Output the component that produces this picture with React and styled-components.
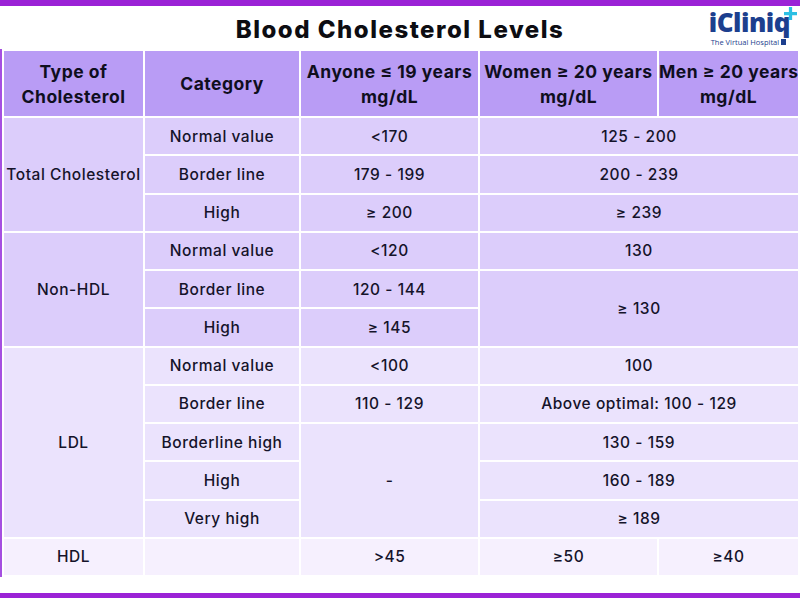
import styled, { createGlobalStyle } from 'styled-components';

const GlobalStyle = createGlobalStyle`
    html, body {
        margin: 0;
        padding: 0;
        background: #fff;
    }
    body {
        font-family: Inter, "Liberation Sans", sans-serif;
        color: #15132a;
    }
`;

const colors = {
    bar: '#9b22d6',
    edge: '#a54fe0',
    head: '#b99cf5',
    mid: '#dccdfb',
    light: '#ebe3fd',
    pale: '#f6f0fe',
};

const Page = styled.div`
    width: 800px;
    height: 600px;
    display: flex;
    flex-direction: column;
    background: #fff;
    overflow: hidden;
`;

const TopBar = styled.div`
    height: 6px;
    background: ${colors.bar};
`;

const TitleRow = styled.div`
    height: 43px;
    display: grid;
    grid-template-columns: 1fr auto 1fr;
    align-items: center;
`;

const Title = styled.h1`
    grid-column: 2;
    margin: 4px 0 0;
    font-size: 24px;
    font-weight: 800;
    letter-spacing: 1.5px;
    color: #0d0d12;
`;

const Logo = styled.div`
    grid-column: 3;
    justify-self: end;
    margin-right: 10px;
    display: flex;
    flex-direction: column;
    align-items: flex-start;
    line-height: 1;
`;

const LogoMark = styled.div`
    position: relative;
    height: 27px;
    font-family: "Open Sans", sans-serif;
    font-size: 26px;
    line-height: 27px;
    font-weight: 800;
    letter-spacing: -0.5px;
    color: #1c3f8e;
`;

const Plus = styled.svg`
    position: absolute;
    top: -2px;
    right: -7px;
`;

const Tagline = styled.div`
    display: flex;
    align-items: center;
    gap: 2px;
    margin-top: 2px;
    margin-left: 2px;
    font-family: "Open Sans", sans-serif;
    font-size: 7.5px;
    line-height: 8px;
    color: #1c3f8e;
`;

const Square = styled.span`
    width: 5px;
    height: 6px;
    background: #1c3f8e;
`;

const Table = styled.table`
    width: 800px;
    border-collapse: separate;
    border-spacing: 2px;
    border-left: 2px solid ${colors.edge};
    border-right: 2px solid ${colors.edge};
    border-top: 0;
    border-bottom: 0;
    margin: 0;
    table-layout: fixed;
`;

const Th = styled.th`
    background: ${colors.head};
    height: 65px;
    padding: 0;
    font-size: 17.5px;
    font-weight: 700;
    letter-spacing: 0.5px;
    line-height: 25px;
    text-align: center;
    white-space: nowrap;
    color: #0f0e1e;
`;

const Td = styled.td`
    background: ${p => colors[p.$tone]};
    height: 36.25px;
    padding: 0;
    font-size: 15.5px;
    font-weight: 500;
    letter-spacing: 0.55px;
    text-align: center;
    white-space: nowrap;
    vertical-align: middle;
`;

const Spacer = styled.div`
    flex: 1;
`;

const BottomBar = styled.div`
    height: 5px;
    margin-bottom: 2px;
    background: ${colors.bar};
`;

const groups = [
    {
        name: 'Total Cholesterol',
        tone: 'mid',
        rows: [
            ['Normal value', '<170', '125 - 200'],
            ['Border line', '179 - 199', '200 - 239'],
            ['High', '≥ 200', '≥ 239'],
        ],
    },
];

export default function App() {
    return (
        <Page>
            <GlobalStyle />
            <TopBar />
            <TitleRow>
                <Title>Blood Cholesterol Levels</Title>
                <Logo>
                    <LogoMark>
                        iCliniq
                        <Plus width="13" height="13" viewBox="0 0 12 12">
                            <path d="M4.5 0h3v4.5H12v3H7.5V12h-3V7.5H0v-3h4.5z" fill="#2bbfe3" />
                        </Plus>
                    </LogoMark>
                    <Tagline>
                        The Virtual Hospital <Square />
                    </Tagline>
                </Logo>
            </TitleRow>
            <Table>
                <colgroup>
                    <col style={{ width: 139 }} />
                    <col style={{ width: 154 }} />
                    <col style={{ width: 177 }} />
                    <col style={{ width: 177 }} />
                    <col style={{ width: 139 }} />
                </colgroup>
                <thead>
                    <tr>
                        <Th>Type of<br />Cholesterol</Th>
                        <Th>Category</Th>
                        <Th>Anyone ≤ 19 years<br />mg/dL</Th>
                        <Th>Women ≥ 20 years<br />mg/dL</Th>
                        <Th>Men ≥ 20 years<br />mg/dL</Th>
                    </tr>
                </thead>
                <tbody>
                    {groups.map(g =>
                        g.rows.map((r, i) => (
                            <tr key={g.name + i}>
                                {i === 0 && (
                                    <Td $tone={g.tone} rowSpan={g.rows.length}>{g.name}</Td>
                                )}
                                <Td $tone={g.tone}>{r[0]}</Td>
                                <Td $tone={g.tone}>{r[1]}</Td>
                                <Td $tone={g.tone} colSpan={2}>{r[2]}</Td>
                            </tr>
                        ))
                    )}
                    <tr>
                        <Td $tone="mid" rowSpan={3}>Non-HDL</Td>
                        <Td $tone="mid">Normal value</Td>
                        <Td $tone="mid">&lt;120</Td>
                        <Td $tone="mid" colSpan={2}>130</Td>
                    </tr>
                    <tr>
                        <Td $tone="mid">Border line</Td>
                        <Td $tone="mid">120 - 144</Td>
                        <Td $tone="mid" colSpan={2} rowSpan={2}>≥ 130</Td>
                    </tr>
                    <tr>
                        <Td $tone="mid">High</Td>
                        <Td $tone="mid">≥ 145</Td>
                    </tr>
                    <tr>
                        <Td $tone="light" rowSpan={5}>LDL</Td>
                        <Td $tone="light">Normal value</Td>
                        <Td $tone="light">&lt;100</Td>
                        <Td $tone="light" colSpan={2}>100</Td>
                    </tr>
                    <tr>
                        <Td $tone="light">Border line</Td>
                        <Td $tone="light">110 - 129</Td>
                        <Td $tone="light" colSpan={2}>Above optimal: 100 - 129</Td>
                    </tr>
                    <tr>
                        <Td $tone="light">Borderline high</Td>
                        <Td $tone="light" rowSpan={3}>-</Td>
                        <Td $tone="light" colSpan={2}>130 - 159</Td>
                    </tr>
                    <tr>
                        <Td $tone="light">High</Td>
                        <Td $tone="light" colSpan={2}>160 - 189</Td>
                    </tr>
                    <tr>
                        <Td $tone="light">Very high</Td>
                        <Td $tone="light" colSpan={2}>≥ 189</Td>
                    </tr>
                    <tr>
                        <Td $tone="pale">HDL</Td>
                        <Td $tone="pale"></Td>
                        <Td $tone="pale">&gt;45</Td>
                        <Td $tone="pale">≥50</Td>
                        <Td $tone="pale">≥40</Td>
                    </tr>
                </tbody>
            </Table>
            <Spacer />
            <BottomBar />
        </Page>
    );
}
